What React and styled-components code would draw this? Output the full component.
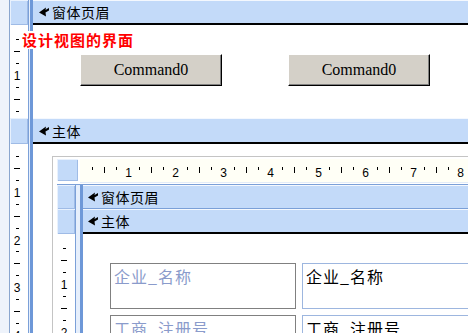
import React from 'react';
import styled, { createGlobalStyle } from 'styled-components';

const GlobalStyle = createGlobalStyle`
  html, body { margin: 0; padding: 0; background: #fff; }
  body { font-family: "Noto Sans CJK SC", "Liberation Sans", sans-serif; }
`;

const BLUE = '#c3daf9';
const LINE = '#7ba0d8';
const UNIT = 47.5;

const Screen = styled.div`
  position: relative;
  width: 468px;
  height: 333px;
  overflow: hidden;
  background: #fff;
  display: flex;
  flex-direction: column;
`;

const Row = styled.div`
  display: flex;
  flex: ${p => (p.$grow ? 1 : 'none')};
  height: ${p => (p.$h ? p.$h + 'px' : 'auto')};
  min-height: 0;
`;

const Gutter = styled.div`
  display: flex;
  flex: none;
`;

const Edge = styled.div`
  width: 9px;
  background: #eef3fb;
  border-right: 1px solid #8aa6cf;
`;

const Cell = styled.div`
  width: 18px;
  background: ${p => (p.$select ? BLUE : '#fff')};
  box-shadow: ${p => (p.$select ? 'inset 1px 1px #e8f1fd, inset -1px -1px #9fbbe6' : 'none')};
`;

const Divider = styled.div`
  width: ${p => p.$w}px;
  background: linear-gradient(to right, ${LINE} 0 1px, #e6effc 1px ${p => p.$w - 3}px, #6e98d8 ${p => p.$w - 3}px);
`;

const Bar = styled.div`
  flex: 1;
  display: flex;
  align-items: center;
  gap: 3px;
  padding-left: ${p => p.$pad}px;
  height: ${p => p.$h}px;
  background: ${BLUE};
  border-top: 1px solid #f4f8fe;
  border-bottom: ${p => (p.$dark ? '2px solid #000' : `1px solid ${LINE}`)};
  font-size: 14px;
  line-height: 1;
  color: #000;
  letter-spacing: 0.5px;
`;

const Content = styled.div`
  flex: 1;
  background: #fff;
`;

const ButtonRow = styled.div`
  display: flex;
  gap: 66px;
  padding: 29px 0 0 47px;
`;

const Button = styled.div`
  width: 142px;
  height: 32px;
  box-sizing: border-box;
  background: #d4d0c8;
  border: 1px solid;
  border-color: #fff #000 #000 #fff;
  box-shadow: inset -1px -1px #808080;
  display: flex;
  align-items: center;
  justify-content: center;
  font: 16px "Liberation Serif", serif;
  color: #000;
`;

const Note = styled.div`
  position: absolute;
  left: 21px;
  top: 31px;
  padding: 0 1px;
  background: #fff;
  color: #ff0000;
  font-weight: bold;
  font-size: 15px;
  line-height: 18px;
  letter-spacing: 1px;
`;

const Canvas = styled.div`
  flex: 1;
  background: #fff;
  padding: 12px 0 0 19px;
  display: flex;
`;

const Frame = styled.div`
  flex: 1;
  display: flex;
  flex-direction: column;
  border-top: 1px solid #c4c4c4;
  border-left: 1px solid #c4c4c4;
  padding: 2px 0 0 4px;
`;

const RulerRow = styled.div`
  display: flex;
  gap: 2px;
  height: 25px;
  flex: none;
  border-bottom: 1px solid ${LINE};
`;

const Corner = styled.div`
  width: 21px;
  height: 22px;
  background: ${BLUE};
  box-shadow: inset 1px 1px #e8f1fd, inset -1px -1px #9fbbe6;
`;

const HRulerBox = styled.div`
  flex: 1;
  height: 23px;
  background: #fffff6;
  border-bottom: 1px solid #e3ecf8;
`;

const Fields = styled.div`
  flex: 1;
  background: #fff;
  display: grid;
  grid-template-columns: 186px 240px;
  grid-auto-rows: 46px;
  gap: 6px;
  padding: 29px 0 0 27px;
`;

const Field = styled.div`
  box-sizing: border-box;
  border: 1px solid ${p => (p.$label ? '#808080' : '#9db6df')};
  padding: 2px 3px;
  font-size: 16px;
  line-height: 20px;
  letter-spacing: 1px;
  color: ${p => (p.$label ? '#8a9bcb' : '#000')};
  white-space: nowrap;
`;

function Arrow() {
  return (
    <svg width="10" height="10" viewBox="0 0 10 10">
      <path d="M0 5.5 L7 0.5 L6.5 3 L10 1 L10 3.5 L6.5 5.5 L7 9.5 Z" fill="#000" />
    </svg>
  );
}

function VRuler({ height, origin }) {
  const marks = [];
  for (let k = 1; origin + k * (UNIT / 4) < height + 10; k++) {
    const y = Math.round(origin + k * (UNIT / 4)) + 0.5;
    if (k % 4 === 0) {
      marks.push(
        <text key={k} x="7" y={y + 4.5} fontSize="12" textAnchor="middle" fontFamily="Liberation Sans, sans-serif">
          {k / 4}
        </text>
      );
    } else if (k % 4 === 2) {
      marks.push(<line key={k} x1="4" x2="10" y1={y} y2={y} stroke="#000" />);
    } else {
      marks.push(<line key={k} x1="6" x2="9" y1={y} y2={y} stroke="#000" />);
    }
  }
  return (
    <svg width="18" height={height} style={{ display: 'block' }} shapeRendering="crispEdges">
      {marks}
    </svg>
  );
}

function HRuler() {
  const marks = [];
  for (let k = 1; k < 36; k++) {
    const x = Math.round(k * (UNIT / 4)) + 0.5;
    if (k % 4 === 0) {
      marks.push(
        <text key={k} x={x} y="18" fontSize="12" textAnchor="middle" fontFamily="Liberation Sans, sans-serif">
          {k / 4}
        </text>
      );
    } else if (k % 4 === 2) {
      marks.push(<line key={k} x1={x} x2={x} y1="8" y2="14" stroke="#000" />);
    } else {
      marks.push(<line key={k} x1={x} x2={x} y1="8" y2="11" stroke="#000" />);
    }
  }
  return (
    <svg width="400" height="23" style={{ display: 'block' }} shapeRendering="crispEdges">
      {marks}
    </svg>
  );
}

function OuterGutter({ select, ruler, origin }) {
  return (
    <Gutter>
      <Edge />
      <Cell $select={select}>{ruler && <VRuler height={ruler} origin={origin} />}</Cell>
      <Divider $w={5} />
    </Gutter>
  );
}

function InnerGutter({ select, ruler, origin }) {
  return (
    <Gutter>
      <Cell $select={select}>{ruler && <VRuler height={ruler} origin={origin} />}</Cell>
      <Divider $w={8} />
    </Gutter>
  );
}

export default function App() {
  return (
    <Screen>
      <GlobalStyle />
      <Row>
        <OuterGutter select />
        <Bar $pad={6} $h={22} $dark>
          <Arrow />
          <span>窗体页眉</span>
        </Bar>
      </Row>
      <Row $h={93}>
        <OuterGutter ruler={93} origin={2.5} />
        <Content>
          <ButtonRow>
            <Button>Command0</Button>
            <Button>Command0</Button>
          </ButtonRow>
        </Content>
      </Row>
      <Row>
        <OuterGutter select />
        <Bar $pad={6} $h={23} $dark>
          <Arrow />
          <span>主体</span>
        </Bar>
      </Row>
      <Row $grow>
        <OuterGutter ruler={200} origin={0.5} />
        <Canvas>
          <Frame>
            <RulerRow>
              <Corner />
              <HRulerBox>
                <HRuler />
              </HRulerBox>
            </RulerRow>
            <Row>
              <InnerGutter select />
              <Bar $pad={5} $h={22}>
                <Arrow />
                <span>窗体页眉</span>
              </Bar>
            </Row>
            <Row>
              <InnerGutter select />
              <Bar $pad={5} $h={22} $dark>
                <Arrow />
                <span>主体</span>
              </Bar>
            </Row>
            <Row $grow>
              <InnerGutter ruler={120} origin={2.5} />
              <Fields>
                <Field $label>企业_名称</Field>
                <Field>企业_名称</Field>
                <Field $label>工商_注册号</Field>
                <Field>工商_注册号</Field>
              </Fields>
            </Row>
          </Frame>
        </Canvas>
      </Row>
      <Note>设计视图的界面</Note>
    </Screen>
  );
}
